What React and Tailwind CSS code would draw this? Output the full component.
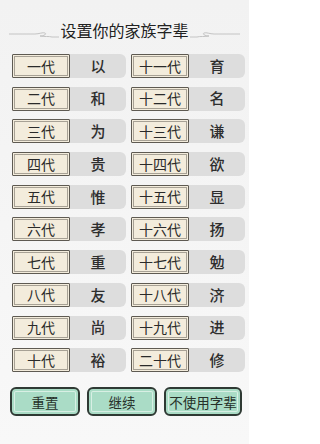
import React from "react";

const LEFT = [
  ["一代", "以"], ["二代", "和"], ["三代", "为"], ["四代", "贵"], ["五代", "惟"],
  ["六代", "孝"], ["七代", "重"], ["八代", "友"], ["九代", "尚"], ["十代", "裕"],
];
const RIGHT = [
  ["十一代", "育"], ["十二代", "名"], ["十三代", "谦"], ["十四代", "欲"], ["十五代", "显"],
  ["十六代", "扬"], ["十七代", "勉"], ["十八代", "济"], ["十九代", "进"], ["二十代", "修"],
];

const font = { fontFamily: '"Noto Sans CJK SC", "Noto Sans", sans-serif' };

function Flourish({ flip }) {
  return (
    <svg width="50" height="12" viewBox="0 0 50 12" className={flip ? "-scale-x-100" : ""}>
      <path
        d="M0 6 H26 C30 6 34 4 36 5 C38 6 35 8 31 8 C35 9 40 8 43 9 H50"
        fill="none"
        stroke="#c4c4c4"
        strokeWidth="1"
      />
    </svg>
  );
}

function Row({ label, ch }) {
  return (
    <div className="flex h-[24px] rounded-[6px] bg-[#dddddd]">
      <div className="flex w-[58px] shrink-0 items-center justify-center rounded-[1px] border-[1.5px] border-[#5e5a52] bg-[#f3ecdc] text-[14px] text-[#2a2a2a] shadow-[inset_0_0_0_1px_#f3ecdc,inset_0_0_0_2px_#a7a195]">
        {label}
      </div>
      <div className="flex flex-1 items-center justify-center text-[15px] font-medium text-[#2e2e2e]">{ch}</div>
    </div>
  );
}

function Btn({ children, w }) {
  return (
    <button className={`flex h-[29px] ${w} items-center justify-center rounded-[6px] border-2 border-[#2f3a34] bg-[#aadcc6] text-[13.5px] text-[#263029] shadow-[inset_0_0_0_2px_#aadcc6,inset_0_0_0_3px_#d8efe4]`}>
      {children}
    </button>
  );
}

export default function App() {
  const rows = LEFT.map((l, i) => [l, RIGHT[i]]);
  return (
    <div className="h-[444px] w-[249px] bg-gradient-to-b from-[#f2f2f2] to-[#f8f8f8]" style={font}>
      <div className="flex items-center justify-center pt-[19px]">
        <div className="mr-[1px] mt-[8px]"><Flourish /></div>
        <h1 className="text-[16px] leading-[22px] text-[#222]">设置你的家族字辈</h1>
        <div className="ml-[1px] mt-[8px]"><Flourish flip /></div>
      </div>

      <div className="mt-[13px] grid grid-cols-2 gap-x-[5px] gap-y-[8.7px] pl-[12px] pr-[4px]">
        {rows.map(([l, r]) => (
          <React.Fragment key={l[0]}>
            <Row label={l[0]} ch={l[1]} />
            <Row label={r[0]} ch={r[1]} />
          </React.Fragment>
        ))}
      </div>

      <div className="mt-[15px] flex gap-[7px] pl-[10px]">
        <Btn w="w-[70px]">重置</Btn>
        <Btn w="w-[70px]">继续</Btn>
        <Btn w="w-[78px]">不使用字辈</Btn>
      </div>
    </div>
  );
}
